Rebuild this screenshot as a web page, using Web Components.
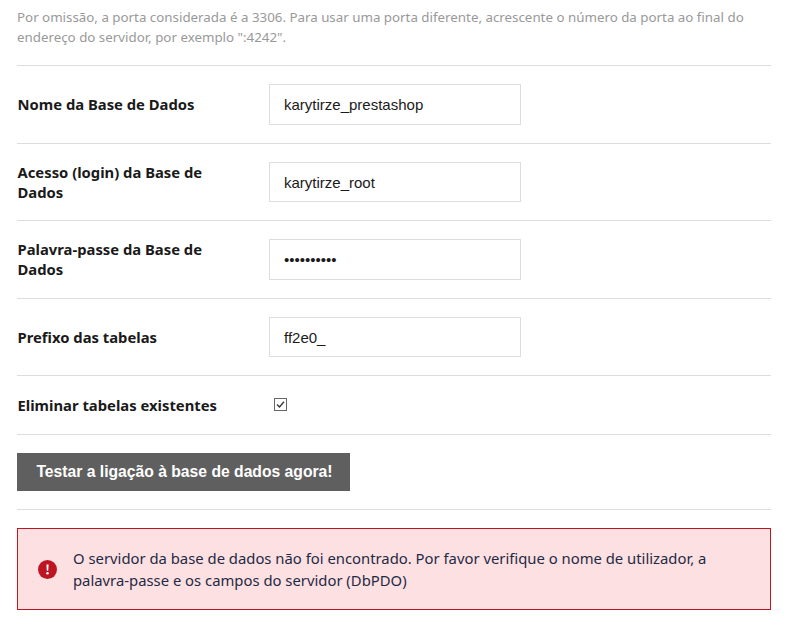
<!DOCTYPE html>
<html lang="pt">
<head>
<meta charset="utf-8">
<title>Base de dados</title>
<style>
  html, body { margin: 0; background: #fff; }
  body { font-family: "Noto Sans", Roboto, sans-serif; color: #1a1a1a; }
</style>
</head>
<body>
<install-form>
  <form-hint>Por omissão, a porta considerada é a 3306. Para usar uma porta diferente, acrescente o número da porta ao final do endereço do servidor, por exemplo ":4242".</form-hint>
  <form-row label="Nome da Base de Dados"><text-field>karytirze_prestashop</text-field></form-row>
  <form-row label="Acesso (login) da Base de Dados"><text-field>karytirze_root</text-field></form-row>
  <form-row label="Palavra-passe da Base de Dados"><text-field class="pw">••••••••••</text-field></form-row>
  <form-row label="Prefixo das tabelas"><text-field>ff2e0_</text-field></form-row>
  <form-row label="Eliminar tabelas existentes" compact><check-box></check-box></form-row>
  <test-button>Testar a ligação à base de dados agora!</test-button>
  <error-alert>O servidor da base de dados não foi encontrado. Por favor verifique o nome de utilizador, a palavra-passe e os campos do servidor (DbPDO)</error-alert>
</install-form>

<script>
class InstallForm extends HTMLElement {
  constructor() {
    super();
    this.attachShadow({ mode: 'open' });
    this.shadowRoot.innerHTML = `
      <style>
        :host { display: block; padding: 7px 16px 0 17px; }
      </style>
      <slot></slot>
    `;
  }
}

class FormHint extends HTMLElement {
  constructor() {
    super();
    this.attachShadow({ mode: 'open' });
    this.shadowRoot.innerHTML = `
      <style>
        :host {
          display: block;
          height: 58px;
          border-bottom: 1px solid #ddd;
          font-size: 13.33px;
          line-height: 20px;
          color: #999;
        }
        div { width: 735px; }
      </style>
      <div><slot></slot></div>
    `;
  }
}

class FormRow extends HTMLElement {
  constructor() {
    super();
    this.attachShadow({ mode: 'open' });
    this.shadowRoot.innerHTML = `
      <style>
        :host {
          display: grid;
          grid-template-columns: 252px 252px;
          align-items: center;
          padding: 18px 0;
          border-bottom: 1px solid #ddd;
        }
        :host([compact]) { padding: 18.5px 0; }
        .label {
          font-size: 14.8px;
          font-weight: 700;
          line-height: 20.2px;
          padding-left: 0.5px;
          padding-right: 40px;
          color: #1a1a1a;
        }
        :host([compact]) .label { height: 21px; line-height: 21px; }
      </style>
      <div class="label"></div>
      <div><slot></slot></div>
    `;
  }
  connectedCallback() {
    this.shadowRoot.querySelector('.label').textContent = this.getAttribute('label');
  }
}

class TextField extends HTMLElement {
  constructor() {
    super();
    this.attachShadow({ mode: 'open' });
    this.shadowRoot.innerHTML = `
      <style>
        :host {
          display: flex;
          align-items: center;
          box-sizing: border-box;
          height: 40.5px;
          padding: 1px 14px 0;
          border: 1px solid #ddd;
          font-family: "Liberation Sans", Arial, sans-serif;
          font-size: 15px;
          color: #1a1a1a;
          white-space: nowrap;
        }
      </style>
      <slot></slot>
    `;
  }
}

class CheckBox extends HTMLElement {
  constructor() {
    super();
    this.attachShadow({ mode: 'open' });
    this.shadowRoot.innerHTML = `
      <style>
        :host { display: block; height: 13px; padding: 0 0 2px 5px; }
        svg { display: block; }
      </style>
      <svg width="13" height="13" viewBox="0 0 13 13">
        <rect x="0.5" y="0.5" width="12" height="12" fill="#fff" stroke="#666"/>
        <path d="M3 6.5 L5.5 9 L10 3.8" fill="none" stroke="#333" stroke-width="1.3"/>
      </svg>
    `;
  }
}

class TestButton extends HTMLElement {
  constructor() {
    super();
    this.attachShadow({ mode: 'open' });
    this.shadowRoot.innerHTML = `
      <style>
        :host {
          display: block;
          padding: 18px 0;
          border-bottom: 1px solid #ddd;
        }
        .btn {
          display: flex;
          align-items: center;
          justify-content: center;
          box-sizing: border-box;
          width: 333px;
          height: 38px;
          padding-left: 2px;
          background: #5f5f5f;
          color: #fff;
          font-family: "Liberation Sans", Arial, sans-serif;
          font-size: 15.7px;
          font-weight: 700;
        }
      </style>
      <div class="btn"><slot></slot></div>
    `;
  }
}

class ErrorAlert extends HTMLElement {
  constructor() {
    super();
    this.attachShadow({ mode: 'open' });
    this.shadowRoot.innerHTML = `
      <style>
        :host {
          display: flex;
          align-items: center;
          gap: 16px;
          box-sizing: border-box;
          height: 82px;
          margin-top: 18px;
          padding: 0 20px;
          background: #fde0e2;
          border: 1px solid #bd1622;
          font-size: 14.84px;
          line-height: 22px;
          color: #1f2a44;
        }
        svg { flex: none; display: block; }
        div { width: 650px; }
      </style>
      <svg width="19" height="19" viewBox="0 0 19 19">
        <circle cx="9.5" cy="9.5" r="9.5" fill="#bd1622"/>
        <path d="M8.4 4.6 H10.6 L10.2 10.8 H8.8 Z" fill="#fff"/>
        <circle cx="9.5" cy="13.3" r="1.25" fill="#fff"/>
      </svg>
      <div><slot></slot></div>
    `;
  }
}

customElements.define('install-form', InstallForm);
customElements.define('form-hint', FormHint);
customElements.define('form-row', FormRow);
customElements.define('text-field', TextField);
customElements.define('check-box', CheckBox);
customElements.define('test-button', TestButton);
customElements.define('error-alert', ErrorAlert);
</script>
</body>
</html>
